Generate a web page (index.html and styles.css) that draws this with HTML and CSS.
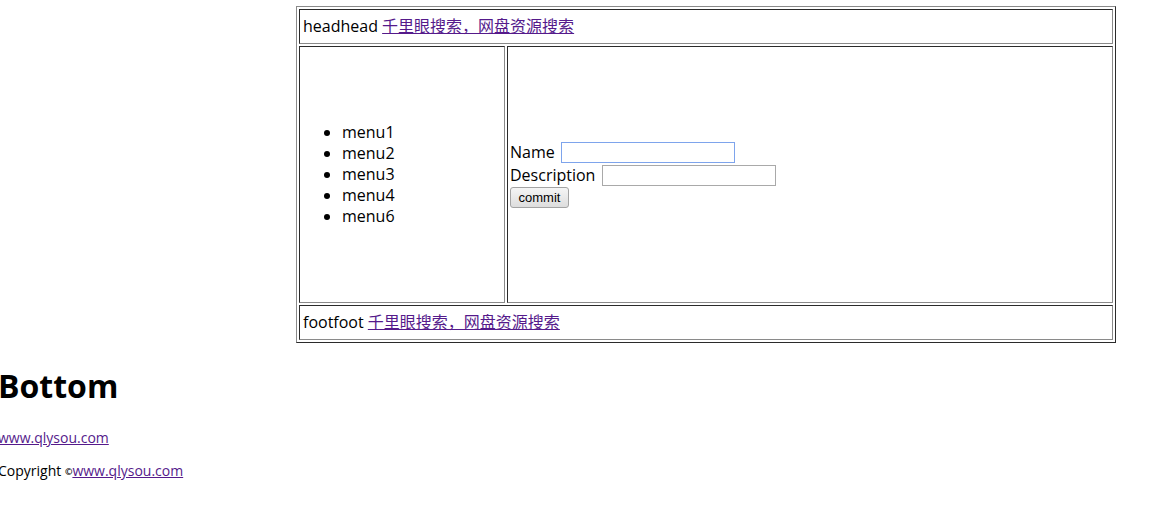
FILE: index.html
```html
<!DOCTYPE html>
<html lang="zh-CN">
<head>
<meta charset="utf-8">
<title>Layout</title>
<link rel="stylesheet" href="styles.css">
</head>
<body>
<table class="layout">
  <tr>
    <td colspan="2" class="bar">headhead <a href="#">千里眼搜索，网盘资源搜索</a></td>
  </tr>
  <tr class="middle">
    <td class="menu">
      <ul class="menu-list">
        <li>menu1</li>
        <li>menu2</li>
        <li>menu3</li>
        <li>menu4</li>
        <li>menu6</li>
      </ul>
    </td>
    <td class="main">
      <form class="form">
        <div class="row">Name <input class="field focused name-field" type="text"></div>
        <div class="row">Description <input class="field desc-field" type="text"></div>
        <div class="row short"><button class="btn" type="button">commit</button></div>
      </form>
    </td>
  </tr>
  <tr>
    <td colspan="2" class="bar">footfoot <a href="#">千里眼搜索，网盘资源搜索</a></td>
  </tr>
</table>
<div class="bottom">
  <h1 class="title">Bottom</h1>
  <p class="small"><a href="#">www.qlysou.com</a></p>
  <p class="small">Copyright <span class="copy">©</span><a href="#">www.qlysou.com</a></p>
</div>
</body>
</html>
```

FILE: styles.css
```css
html, body {
  background: #fff;
}
body {
  margin: 6px 0 0 -2px;
  font-family: "Open Sans", "Noto Sans CJK SC", sans-serif;
  font-size: 16px;
  line-height: 21px;
  color: #000;
}
a {
  color: #551a8b;
  text-decoration: underline;
}
.layout {
  box-sizing: border-box;
  margin-left: 298px;
  width: 820px;
  border-collapse: separate;
  border-spacing: 2px;
  border: 1px solid;
  border-color: #8a8a8a #2b2b2b #2b2b2b #8a8a8a;
}
.layout td {
  box-sizing: border-box;
  border: 1px solid;
  border-color: #2b2b2b #8a8a8a #8a8a8a #2b2b2b;
  padding: 1px;
  vertical-align: middle;
}
.layout td.bar {
  height: 35px;
  padding-left: 3px;
}
.middle td {
  height: 257px;
}
.menu {
  width: 206px;
}
.menu-list {
  margin: 16px 0;
  padding-left: 41px;
}
.layout td.main {
  padding-left: 2px;
}
.form {
  margin: 0;
}
.row {
  display: flex;
  align-items: center;
  height: 23px;
}
.row.short {
  height: 21px;
}
.field {
  box-sizing: border-box;
  width: 174px;
  height: 21px;
  margin: 0;
  padding: 1px 2px;
  border: 1px solid #a9a9a9;
  font: 13px "Liberation Sans", sans-serif;
}
.name-field {
  margin-left: 6px;
}
.desc-field {
  margin-left: 7px;
}
.field.focused {
  border-color: #7ea4ec;
}
.btn {
  box-sizing: border-box;
  width: 59px;
  height: 21px;
  margin: 0;
  padding: 0 6px;
  border: 1px solid #a3a3a3;
  border-radius: 3px;
  background: linear-gradient(#f5f5f5, #dddddd);
  font: 13px "Liberation Sans", sans-serif;
  color: #000;
}
.title {
  font-size: 32px;
  line-height: 43px;
  font-weight: bold;
  margin: 21px 0;
}
.small {
  font-size: 14px;
  line-height: 19px;
  margin: 14px 0;
}
.copy {
  font-size: 9px;
  font-weight: bold;
  vertical-align: 1px;
}
```
